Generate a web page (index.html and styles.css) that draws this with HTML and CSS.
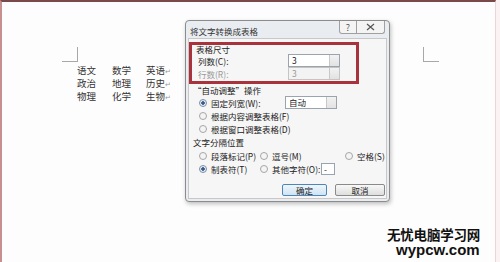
FILE: index.html
```html
<!DOCTYPE html>
<html lang="zh-CN">
<head>
    <meta charset="UTF-8">
    <title>将文字转换成表格</title>
    <link rel="stylesheet" href="styles.css">
</head>
<body>
<div class="page">
    <div class="marks">
        <span class="mark mark-left"></span>
        <span class="mark mark-right"></span>
    </div>
    <div class="words">
        <span>语文</span><span>数学</span><span>英语<i>↵</i></span>
        <span>政治</span><span>地理</span><span>历史<i>↵</i></span>
        <span>物理</span><span>化学</span><span>生物<i>↵</i></span>
    </div>

    <div class="dialog">
        <div class="titlebar">
            <span class="title">将文字转换成表格</span>
            <div class="winbtns">
                <span class="winbtn help">?</span>
                <span class="winbtn close">
                    <svg width="9" height="8" viewBox="0 0 9 8"><path d="M1 1 L8 7 M8 1 L1 7" stroke="#555" stroke-width="1.2" fill="none"/></svg>
                </span>
            </div>
        </div>
        <div class="panel">
            <div class="sizebox">
                <div class="grouptitle">表格尺寸</div>
                <div class="row indent">
                    <span class="label">列数(C):</span>
                    <span class="spin"><span class="val">3</span><span class="arrows"></span></span>
                </div>
                <div class="row indent disabled">
                    <span class="label">行数(R):</span>
                    <span class="spin"><span class="val">3</span><span class="arrows"></span></span>
                </div>
            </div>

            <div class="grouptitle gt">“自动调整”操作</div>
            <div class="row radrow">
                <span class="opt wide"><span class="radio on"></span>固定列宽(W):</span>
                <span class="spin"><span class="val">自动</span><span class="arrows"></span></span>
            </div>
            <div class="row radrow"><span class="opt"><span class="radio"></span>根据内容调整表格(F)</span></div>
            <div class="row radrow"><span class="opt"><span class="radio"></span>根据窗口调整表格(D)</span></div>

            <div class="grouptitle gt2">文字分隔位置</div>
            <div class="row radrow">
                <span class="opt col1"><span class="radio"></span>段落标记(P)</span>
                <span class="opt col2"><span class="radio"></span>逗号(M)</span>
                <span class="opt"><span class="radio"></span>空格(S)</span>
            </div>
            <div class="row radrow">
                <span class="opt col1"><span class="radio on"></span>制表符(T)</span>
                <span class="opt col2b"><span class="radio"></span>其他字符(O):</span>
                <span class="small">-</span>
            </div>

            <div class="buttons">
                <span class="btn ok">确定</span>
                <span class="btn">取消</span>
            </div>
        </div>
    </div>

    <div class="watermark">
        <div class="wm-cn">无忧电脑学习网</div>
        <div class="wm-en">wypcw.com</div>
    </div>
</div>
</body>
</html>
```

FILE: styles.css
```css
body {
    margin: 0;
    background: #fbf3f3;
    font-family: "Noto Sans CJK SC", "Liberation Sans", sans-serif;
}
.page {
    position: relative;
    width: 496px;
    height: 262px;
    background: #fefdfd;
    border-top: 2px solid #7a4a4a;
    border-left: 2px solid #c88f8f;
    border-right: 1px solid #ead6d6;
    box-sizing: border-box;
    padding-top: 45px;
    overflow: hidden;
}
.marks {
    display: flex;
    padding-left: 60px;
}
.mark {
    width: 15px;
    height: 14px;
    border-bottom: 1px solid #a8a8a8;
}
.mark-left {
    border-right: 1px solid #a8a8a8;
}
.mark-right {
    margin-left: 345px;
    border-left: 1px solid #a8a8a8;
}
.words {
    display: grid;
    grid-template-columns: 35px 34px 40px;
    grid-auto-rows: 13px;
    padding-left: 75px;
    margin-top: 2px;
    font-size: 9.5px;
    line-height: 13px;
    color: #333;
}
.words i {
    font-style: normal;
    font-size: 7px;
    color: #999;
}

/* dialog */
.dialog {
    position: absolute;
    left: 183px;
    top: 18px;
    width: 203px;
    height: 180px;
    background: #e9edf1;
    border: 1px solid #8c8c8c;
    border-radius: 4px;
    box-shadow: 1px 2px 4px rgba(0, 0, 0, 0.25);
    font-size: 8.5px;
    color: #222;
}
.titlebar {
    display: flex;
    justify-content: space-between;
    height: 17px;
}
.title {
    padding: 5px 0 0 4px;
    line-height: 10px;
    color: #333;
}
.winbtns {
    display: flex;
    margin-right: 4px;
}
.winbtn {
    display: flex;
    align-items: center;
    justify-content: center;
    height: 13px;
    border: 1px solid #a0a0a0;
    border-top: none;
    background: #f4f4f4;
    box-sizing: border-box;
}
.help {
    width: 18px;
    border-radius: 0 0 0 3px;
    font-size: 9px;
    color: #555;
}
.close {
    width: 28px;
    border-left: none;
    border-radius: 0 0 3px 0;
}
.panel {
    margin: 0 2px;
    height: 161px;
    background: #f6f6f6;
    border: 1px solid #c8c8c8;
    box-sizing: border-box;
}
.sizebox {
    width: 170px;
    height: 42px;
    margin-top: 3px;
    border: 3px solid #a8333d;
    box-sizing: border-box;
    padding-left: 1px;
}
.grouptitle {
    height: 9px;
    line-height: 9px;
    padding-left: 3px;
}
.row {
    display: flex;
    align-items: center;
    height: 13px;
}
.indent {
    padding-left: 5px;
}
.label {
    width: 90px;
}
.disabled {
    color: #999;
}
.spin {
    display: flex;
    width: 52px;
    height: 13px;
    border: 1px solid #9aa4ae;
    background: #fff;
    box-sizing: border-box;
}
.disabled .spin {
    border-color: #c4c4c4;
    background: #f3f3f3;
}
.val {
    flex: 1;
    padding-left: 3px;
    line-height: 11px;
}
.arrows {
    width: 9px;
    background: linear-gradient(#f2f2f2, #e2e2e2);
    border-left: 1px solid #c8c8c8;
}
.gt {
    height: 12px;
    line-height: 12px;
    padding-left: 4px;
}
.gt2 {
    height: 13px;
    line-height: 13px;
    margin-top: 1px;
    padding-left: 4px;
}
.radrow {
    padding-left: 10px;
}
.opt {
    display: flex;
    align-items: center;
}
.wide {
    width: 86px;
}
.col1 {
    width: 61px;
}
.col2 {
    width: 85px;
}
.col2b {
    width: 61px;
}
.radio {
    width: 6px;
    height: 6px;
    margin-right: 4px;
    border: 1px solid #a6a6a6;
    border-radius: 50%;
    background: #f4f4f4;
    box-sizing: content-box;
}
.radio.on {
    background: radial-gradient(circle, #3a5a8a 0 1.5px, #e6eef6 2px);
    border-color: #7a8ea8;
}
.small {
    width: 14px;
    height: 12px;
    line-height: 10px;
    padding-left: 2px;
    border: 1px solid #9aa4ae;
    background: #fff;
    box-sizing: border-box;
}
.buttons {
    display: flex;
    gap: 8px;
    padding-left: 93px;
    margin-top: 9px;
}
.btn {
    width: 50px;
    height: 12px;
    line-height: 10px;
    text-align: center;
    border: 1px solid #8a8a8a;
    border-radius: 2px;
    background: linear-gradient(#f8f8f8, #dedede);
    box-sizing: border-box;
}
.btn.ok {
    width: 45px;
    border-color: #4f86b8;
    background: linear-gradient(#eef6fc, #cfe3f3);
}

/* watermark */
.watermark {
    position: absolute;
    left: 385px;
    top: 225px;
    font-weight: bold;
    color: #111;
}
.wm-cn {
    font-size: 13.5px;
    line-height: 14px;
    letter-spacing: -0.2px;
}
.wm-en {
    font-family: "Liberation Sans", Arial, sans-serif;
    font-size: 15px;
    line-height: 15px;
    margin-top: 1px;
    padding-left: 9px;
}
```
